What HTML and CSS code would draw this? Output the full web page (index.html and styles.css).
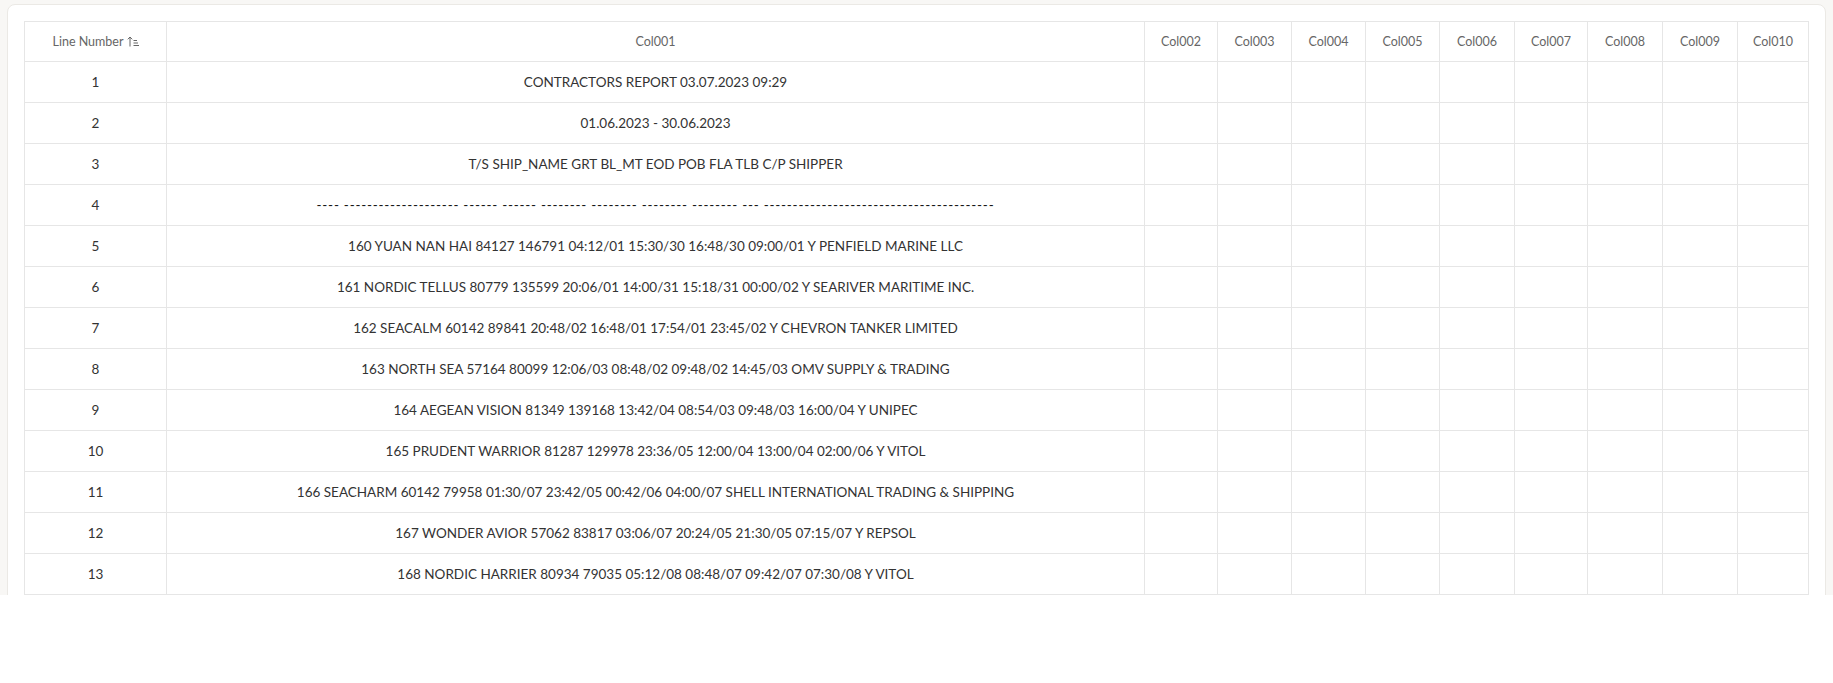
FILE: index.html
```html
<!DOCTYPE html>
<html>
<head>
<meta charset="utf-8">
<link rel="stylesheet" href="styles.css">
</head>
<body>
<div class="viewport">
  <div class="card">
    <table class="grid">
      <colgroup>
        <col class="c-line"><col class="c-main">
        <col class="c-a"><col class="c-b"><col class="c-b"><col class="c-b"><col class="c-c"><col class="c-a"><col class="c-c"><col class="c-c"><col class="c-d">
      </colgroup>
      <thead>
        <tr>
          <th><span class="th-inner">Line Number
            <svg class="sort" width="12" height="11" viewBox="0 0 12 11"><path d="M3 10.5V1M0.8 3.3L3 1L5.2 3.3" fill="none" stroke="#666" stroke-width="1"/><path d="M6.5 4.5H10M6.5 7H11M6.5 9.5H12" stroke="#666" stroke-width="1"/></svg></span></th>
          <th>Col001</th><th>Col002</th><th>Col003</th><th>Col004</th><th>Col005</th><th>Col006</th><th>Col007</th><th>Col008</th><th>Col009</th><th>Col010</th>
        </tr>
      </thead>
      <tbody>
        <tr><td>1</td><td>CONTRACTORS REPORT 03.07.2023 09:29</td><td></td><td></td><td></td><td></td><td></td><td></td><td></td><td></td><td></td></tr>
        <tr><td>2</td><td>01.06.2023 - 30.06.2023</td><td></td><td></td><td></td><td></td><td></td><td></td><td></td><td></td><td></td></tr>
        <tr><td>3</td><td>T/S SHIP_NAME GRT BL_MT EOD POB FLA TLB C/P SHIPPER</td><td></td><td></td><td></td><td></td><td></td><td></td><td></td><td></td><td></td></tr>
        <tr><td>4</td><td class="rule">---- -------------------- ------ ------ -------- -------- -------- -------- --- ----------------------------------------</td><td></td><td></td><td></td><td></td><td></td><td></td><td></td><td></td><td></td></tr>
        <tr><td>5</td><td>160 YUAN NAN HAI 84127 146791 04:12/01 15:30/30 16:48/30 09:00/01 Y PENFIELD MARINE LLC</td><td></td><td></td><td></td><td></td><td></td><td></td><td></td><td></td><td></td></tr>
        <tr><td>6</td><td>161 NORDIC TELLUS 80779 135599 20:06/01 14:00/31 15:18/31 00:00/02 Y SEARIVER MARITIME INC.</td><td></td><td></td><td></td><td></td><td></td><td></td><td></td><td></td><td></td></tr>
        <tr><td>7</td><td>162 SEACALM 60142 89841 20:48/02 16:48/01 17:54/01 23:45/02 Y CHEVRON TANKER LIMITED</td><td></td><td></td><td></td><td></td><td></td><td></td><td></td><td></td><td></td></tr>
        <tr><td>8</td><td>163 NORTH SEA 57164 80099 12:06/03 08:48/02 09:48/02 14:45/03 OMV SUPPLY &amp; TRADING</td><td></td><td></td><td></td><td></td><td></td><td></td><td></td><td></td><td></td></tr>
        <tr><td>9</td><td>164 AEGEAN VISION 81349 139168 13:42/04 08:54/03 09:48/03 16:00/04 Y UNIPEC</td><td></td><td></td><td></td><td></td><td></td><td></td><td></td><td></td><td></td></tr>
        <tr><td>10</td><td>165 PRUDENT WARRIOR 81287 129978 23:36/05 12:00/04 13:00/04 02:00/06 Y VITOL</td><td></td><td></td><td></td><td></td><td></td><td></td><td></td><td></td><td></td></tr>
        <tr><td>11</td><td>166 SEACHARM 60142 79958 01:30/07 23:42/05 00:42/06 04:00/07 SHELL INTERNATIONAL TRADING &amp; SHIPPING</td><td></td><td></td><td></td><td></td><td></td><td></td><td></td><td></td><td></td></tr>
        <tr><td>12</td><td>167 WONDER AVIOR 57062 83817 03:06/07 20:24/05 21:30/05 07:15/07 Y REPSOL</td><td></td><td></td><td></td><td></td><td></td><td></td><td></td><td></td><td></td></tr>
        <tr><td>13</td><td>168 NORDIC HARRIER 80934 79035 05:12/08 08:48/07 09:42/07 07:30/08 Y VITOL</td><td></td><td></td><td></td><td></td><td></td><td></td><td></td><td></td><td></td></tr>
      </tbody>
    </table>
  </div>
</div>
</body>
</html>
```

FILE: styles.css
```css
html, body {
  margin: 0;
  padding: 0;
  background: #ffffff;
}

.viewport {
  height: 595px;
  box-sizing: border-box;
  padding: 4px 7px 0 7px;
  background: #f8f7f5;
  overflow: hidden;
}

.card {
  background: #ffffff;
  border: 1px solid #ebe9e5;
  border-radius: 8px;
  padding: 16px 16px;
}

.grid {
  width: 1785px;
  border-collapse: collapse;
  table-layout: fixed;
  font-family: Lato, "Liberation Sans", sans-serif;
  color: #333333;
}

.c-line { width: 142px; }
.c-main { width: 978px; }
.c-a { width: 73px; }
.c-b { width: 74px; }
.c-c { width: 75px; }
.c-d { width: 71px; }

.grid th,
.grid td {
  border: 1px solid #e6e6e6;
  text-align: center;
  padding: 0 6px;
  white-space: nowrap;
  overflow: hidden;
}

.grid th {
  height: 39px;
  font-size: 12.5px;
  font-weight: 400;
  color: #666666;
}

.grid td {
  height: 40px;
  font-size: 13.5px;
}

.grid td.rule {
  letter-spacing: 0.75px;
  color: #111111;
}

.th-inner {
  display: inline-flex;
  align-items: center;
  gap: 3px;
}

.sort {
  display: block;
}
```
